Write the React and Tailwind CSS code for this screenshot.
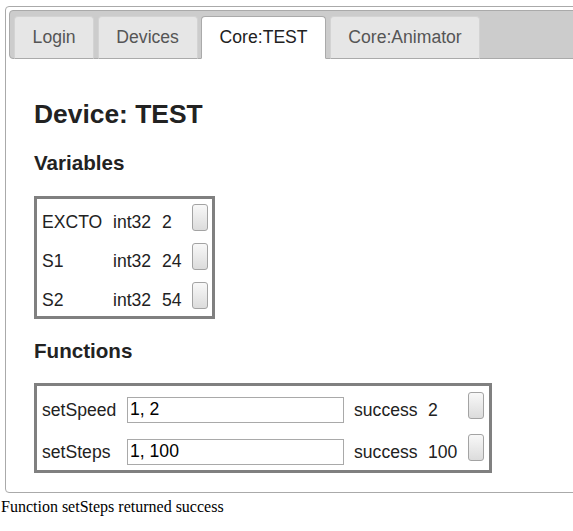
const tabs = [
  { label: 'Login' },
  { label: 'Devices' },
  { label: 'Core:TEST', active: true },
  { label: 'Core:Animator' },
];

const variables = [
  { name: 'EXCTO', type: 'int32', value: '2' },
  { name: 'S1', type: 'int32', value: '24' },
  { name: 'S2', type: 'int32', value: '54' },
];

const functions = [
  { name: 'setSpeed', args: '1, 2', status: 'success', result: '2' },
  { name: 'setSteps', args: '1, 100', status: 'success', result: '100' },
];

const SmallButton = ({ className = '' }) => (
  <button
    type="button"
    className={`w-[16px] h-[27px] shrink-0 rounded-[3px] border border-[#a3a3a3] bg-gradient-to-b from-[#f8f8f8] to-[#dcdcdc] ${className}`}
  />
);

const App = () => {
  return (
    <div className="w-[573px] h-[531px] overflow-hidden bg-white font-['Liberation_Sans',Arial,sans-serif]">
      {/* Tabs widget */}
      <div className="mt-[6px] ml-[5px] w-[620px] border border-[#aaaaaa] rounded-[4px] p-[3px]">
        {/* Tab bar */}
        <div className="flex items-start gap-[3.5px] border border-[#aaaaaa] bg-[#cccccc] rounded-[4px] pt-[5px] pl-[4px]">
          {tabs.map(tab => (
            <div
              key={tab.label}
              className={`-mb-px px-[17.6px] py-[8.8px] text-[17.6px] leading-[23px] rounded-t-[4px] border ${
                tab.active
                  ? 'bg-white border-[#aaaaaa] border-b-white text-[#212121]'
                  : 'bg-[#e6e6e6] border-[#d3d3d3] border-b-[#aaaaaa] text-[#555555]'
              }`}
            >
              {tab.label}
            </div>
          ))}
        </div>

        {/* Panel */}
        <div className="pl-[25px] pt-[40px] pb-[16px] text-[#222222]">
          <h2 className="text-[26.4px] leading-[30px] font-bold">Device: TEST</h2>

          <h3 className="mt-[22px] text-[20.6px] leading-[24px] font-bold">Variables</h3>
          <div className="mt-[21px] w-fit border-[3px] border-[#808080] pl-[5px] pr-[4px] text-[17.6px] leading-[20px]">
            {variables.map(v => (
              <div key={v.name} className="flex items-start h-[39px]">
                <span className="w-[71px] mt-[13px]">{v.name}</span>
                <span className="w-[49px] mt-[13px]">{v.type}</span>
                <span className="w-[30px] mt-[13px]">{v.value}</span>
                <SmallButton className="mt-[5px]" />
              </div>
            ))}
          </div>

          <h3 className="mt-[20px] text-[20.6px] leading-[24px] font-bold">Functions</h3>
          <div className="mt-[20px] w-fit border-[3px] border-[#808080] pl-[5px] pr-[5px] text-[17.6px] leading-[20px]">
            {functions.map(f => (
              <div key={f.name} className="flex items-start h-[42px]">
                <span className="w-[85px] mt-[14px]">{f.name}</span>
                <input
                  type="text"
                  defaultValue={f.args}
                  className="w-[217px] h-[26px] mt-[11px] px-[2px] border border-[#a9a9a9] bg-white text-[17.6px] text-black outline-none"
                />
                <span className="w-[74px] ml-[10px] mt-[14px]">{f.status}</span>
                <span className="w-[40px] mt-[14px]">{f.result}</span>
                <SmallButton className="mt-[6px]" />
              </div>
            ))}
          </div>
        </div>
      </div>

      {/* Status line */}
      <p className="mt-[2px] pl-[1px] font-['Liberation_Serif','Times_New_Roman',serif] text-[16px] text-black">
        Function setSteps returned success
      </p>
    </div>
  );
};

export default App;
